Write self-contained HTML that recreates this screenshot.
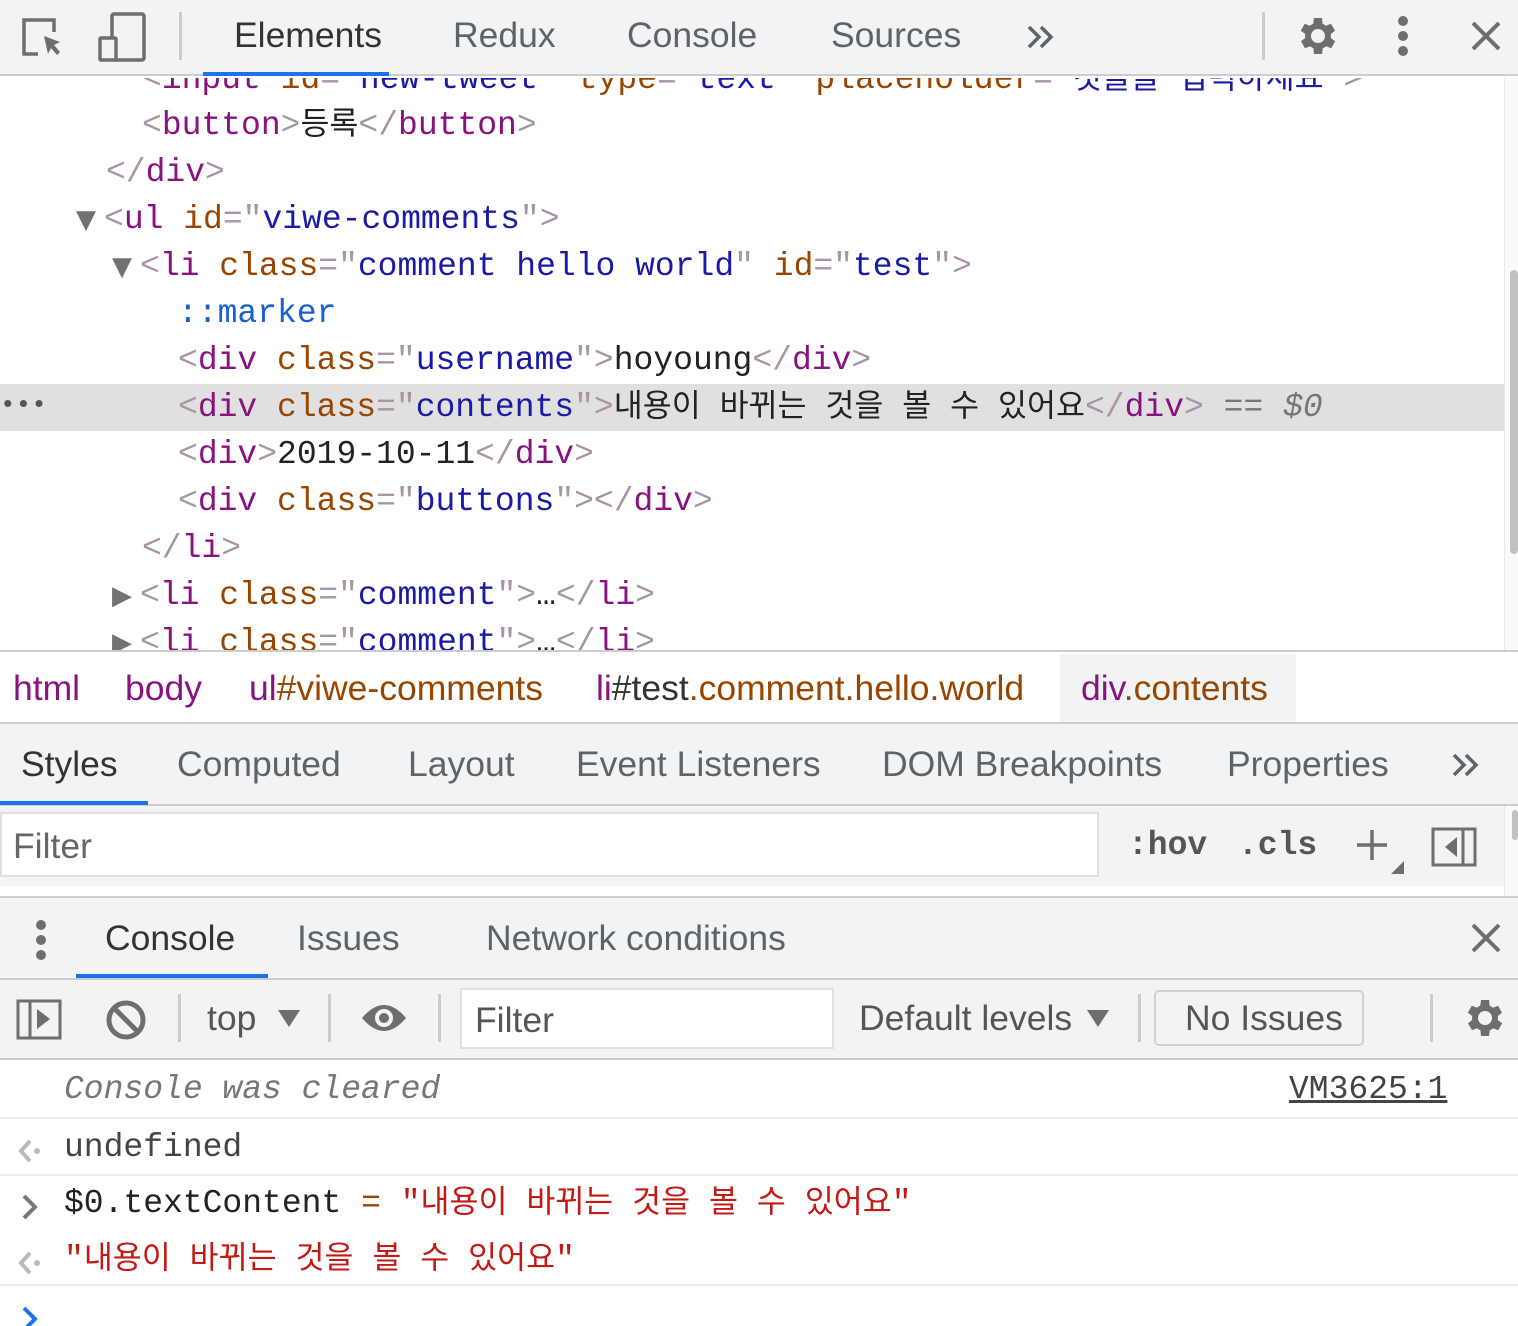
<!DOCTYPE html>
<html><head><meta charset="utf-8"><style>
*{margin:0;padding:0;box-sizing:border-box}
body{width:1518px;height:1322px;overflow:hidden;background:#fff;font-family:"Liberation Sans","Noto Sans CJK KR",sans-serif;position:relative;color:#333}
.abs{position:absolute}
.mono{font-family:"Liberation Mono","Noto Sans CJK KR",monospace;font-size:33px;white-space:pre;line-height:47px}
.k{font-size:31.5px}
.tg{color:#881280}.br{color:#a894a6}.at{color:#994500}.av{color:#1a1aa6}.tx{color:#222}
.bar{background:#f1f3f4}
.ui{font-size:35.5px;color:#5f6368;white-space:nowrap}
.line{position:absolute;left:0;height:47px;line-height:47px}
.tri{display:inline-block;width:28px;color:#727272;font-size:26px;font-family:"DejaVu Sans",sans-serif}
</style></head><body>
<!-- top bar -->
<div class="abs bar" style="left:0;top:0;width:1518px;height:76px;border-bottom:2px solid #cbcdd1"></div>
<svg class="abs" style="left:18px;top:14px" width="50" height="48" viewBox="0 0 50 48"><path d="M20 40H6V6h30v12" fill="none" stroke="#6e6e6e" stroke-width="3.5"/><path d="M26 22l16 6-6 3 6 7-3 3-6-7-3 6z" fill="#6e6e6e"/></svg>
<svg class="abs" style="left:98px;top:12px" width="50" height="50" viewBox="0 0 50 50"><rect x="14" y="2" width="32" height="46" rx="2" fill="none" stroke="#6e6e6e" stroke-width="3.5"/><rect x="2" y="26" width="16" height="22" rx="1" fill="#f1f3f4" stroke="#6e6e6e" stroke-width="3.5"/></svg>
<div class="abs" style="left:179px;top:12px;width:3px;height:48px;background:#ccc"></div>
<div class="abs ui" style="left:234px;top:15px;color:#333">Elements</div>
<div class="abs" style="left:203px;top:72px;width:186px;height:4px;background:#1a73e8"></div>
<div class="abs ui" style="left:453px;top:15px">Redux</div>
<div class="abs ui" style="left:627px;top:15px">Console</div>
<div class="abs ui" style="left:831px;top:15px">Sources</div>
<svg class="abs" style="left:1026px;top:24px" width="30" height="26"><path d="M3 3l10 10L3 23M15 3l10 10-10 10" fill="none" stroke="#5f6368" stroke-width="3.5"/></svg>
<div class="abs" style="left:1262px;top:12px;width:3px;height:48px;background:#ccc"></div>
<svg class="abs" style="left:1294px;top:12px" width="48" height="48" viewBox="0 0 24 24"><path fill="#6e6e6e" d="M19.4 13a7.5 7.5 0 000-2l2.1-1.6-2-3.5-2.5 1a7 7 0 00-1.7-1L15 3h-4l-.4 2.9a7 7 0 00-1.7 1l-2.5-1-2 3.5L6.6 11a7.5 7.5 0 000 2l-2.1 1.6 2 3.5 2.5-1a7 7 0 001.7 1L11 21h4l.4-2.9a7 7 0 001.7-1l2.5 1 2-3.5zM13 15.5a3.5 3.5 0 110-7 3.5 3.5 0 010 7z" transform="translate(-1 0)"/></svg>
<div class="abs" style="left:1398px;top:16px;width:10px;height:40px"><div style="width:10px;height:10px;border-radius:50%;background:#6e6e6e;margin-bottom:5px"></div><div style="width:10px;height:10px;border-radius:50%;background:#6e6e6e;margin-bottom:5px"></div><div style="width:10px;height:10px;border-radius:50%;background:#6e6e6e"></div></div>
<svg class="abs" style="left:1470px;top:20px" width="32" height="32"><path d="M3 3L29 29M29 3L3 29" stroke="#6e6e6e" stroke-width="4"/></svg>

<!-- elements tree -->
<div class="abs" style="left:0;top:78px;width:1504px;height:572px;overflow:hidden">
<div class="mono" style="position:absolute;top:-22px;left:0;width:1504px">
<div class="line" style="top:0;left:142px"><span class="br">&lt;</span><span class="tg">input</span> <span class="at">id</span><span class="br">="</span><span class="av">new-tweet</span><span class="br">"</span> <span class="at">type</span><span class="br">="</span><span class="av">text</span><span class="br">"</span> <span class="at">placeholder</span><span class="br">="</span><span class="av k">것을을 입력하세요</span><span class="br">"&gt;</span></div>
<div class="line" style="top:46px;left:142px"><span class="br">&lt;</span><span class="tg">button</span><span class="br">&gt;</span><span class="tx k">등록</span><span class="br">&lt;/</span><span class="tg">button</span><span class="br">&gt;</span></div>
<div class="line" style="top:93px;left:106px"><span class="br">&lt;/</span><span class="tg">div</span><span class="br">&gt;</span></div>
<div class="line" style="top:140px;left:76px"><span class="tri">▼</span><span class="br">&lt;</span><span class="tg">ul</span> <span class="at">id</span><span class="br">="</span><span class="av">viwe-comments</span><span class="br">"&gt;</span></div>
<div class="line" style="top:187px;left:112px"><span class="tri">▼</span><span class="br">&lt;</span><span class="tg">li</span> <span class="at">class</span><span class="br">="</span><span class="av">comment hello world</span><span class="br">"</span> <span class="at">id</span><span class="br">="</span><span class="av">test</span><span class="br">"&gt;</span></div>
<div class="line" style="top:234px;left:178px;color:#1a5fd0">::marker</div>
<div class="line" style="top:281px;left:178px"><span class="br">&lt;</span><span class="tg">div</span> <span class="at">class</span><span class="br">="</span><span class="av">username</span><span class="br">"&gt;</span><span class="tx">hoyoung</span><span class="br">&lt;/</span><span class="tg">div</span><span class="br">&gt;</span></div>
<div class="line" style="top:328px;left:0;width:1504px;background:#e0e0e0"><span style="color:#555;font-size:26px;position:absolute;left:0;top:-2px">•••</span><span style="position:absolute;left:178px"><span class="br">&lt;</span><span class="tg">div</span> <span class="at">class</span><span class="br">="</span><span class="av">contents</span><span class="br">"&gt;</span><span class="tx k">내용이 바뀌는 것을 볼 수 있어요</span><span class="br">&lt;/</span><span class="tg">div</span><span class="br">&gt;</span> <span style="color:#777">== <i>$0</i></span></span></div>
<div class="line" style="top:375px;left:178px"><span class="br">&lt;</span><span class="tg">div</span><span class="br">&gt;</span><span class="tx">2019-10-11</span><span class="br">&lt;/</span><span class="tg">div</span><span class="br">&gt;</span></div>
<div class="line" style="top:422px;left:178px"><span class="br">&lt;</span><span class="tg">div</span> <span class="at">class</span><span class="br">="</span><span class="av">buttons</span><span class="br">"&gt;&lt;/</span><span class="tg">div</span><span class="br">&gt;</span></div>
<div class="line" style="top:469px;left:142px"><span class="br">&lt;/</span><span class="tg">li</span><span class="br">&gt;</span></div>
<div class="line" style="top:516px;left:112px"><span class="tri">▶</span><span class="br">&lt;</span><span class="tg">li</span> <span class="at">class</span><span class="br">="</span><span class="av">comment</span><span class="br">"&gt;</span><span class="tx">…</span><span class="br">&lt;/</span><span class="tg">li</span><span class="br">&gt;</span></div>
<div class="line" style="top:563px;left:112px"><span class="tri">▶</span><span class="br">&lt;</span><span class="tg">li</span> <span class="at">class</span><span class="br">="</span><span class="av">comment</span><span class="br">"&gt;</span><span class="tx">…</span><span class="br">&lt;/</span><span class="tg">li</span><span class="br">&gt;</span></div>
</div></div>
<div class="abs" style="left:1504px;top:78px;width:14px;height:572px;background:#fafafa;border-left:1px solid #e6e6e6"></div>
<div class="abs" style="left:1510px;top:270px;width:8px;height:284px;background:#c1c1c1;border-radius:4px"></div>

<!-- breadcrumbs -->
<div class="abs" style="left:0;top:650px;width:1518px;height:74px;background:#fff;border-top:2px solid #cbcdd1;border-bottom:2px solid #cbcdd1"></div>
<div class="abs" style="left:1060px;top:654px;width:236px;height:68px;background:#f1f3f4"></div>
<div class="abs ui" style="left:13px;top:668px;color:#881280">html</div>
<div class="abs ui" style="left:125px;top:668px;color:#881280">body</div>
<div class="abs ui" style="left:249px;top:668px;color:#881280">ul<span style="color:#994500">#viwe-comments</span></div>
<div class="abs ui" style="left:596px;top:668px;color:#881280">li<span style="color:#333">#test</span><span style="color:#994500">.comment.hello.world</span></div>
<div class="abs ui" style="left:1081px;top:668px;color:#881280">div<span style="color:#994500">.contents</span></div>

<!-- styles tabs -->
<div class="abs bar" style="left:0;top:724px;width:1518px;height:82px;border-bottom:2px solid #cbcdd1"></div>
<div class="abs ui" style="left:21px;top:744px;color:#333">Styles</div>
<div class="abs" style="left:0;top:801px;width:148px;height:4px;background:#1a73e8"></div>
<div class="abs ui" style="left:177px;top:744px">Computed</div>
<div class="abs ui" style="left:408px;top:744px">Layout</div>
<div class="abs ui" style="left:576px;top:744px">Event Listeners</div>
<div class="abs ui" style="left:882px;top:744px">DOM Breakpoints</div>
<div class="abs ui" style="left:1227px;top:744px">Properties</div>
<svg class="abs" style="left:1451px;top:752px" width="30" height="26"><path d="M3 3l10 10L3 23M15 3l10 10-10 10" fill="none" stroke="#5f6368" stroke-width="3.5"/></svg>

<!-- filter row -->
<div class="abs bar" style="left:0;top:806px;width:1504px;height:80px"></div>
<div class="abs" style="left:0;top:886px;width:1504px;height:10px;background:#fff"></div>
<div class="abs" style="left:1504px;top:806px;width:14px;height:90px;background:#fafafa;border-left:1px solid #e6e6e6"></div>
<div class="abs" style="left:1512px;top:810px;width:6px;height:30px;background:#c1c1c1;border-radius:3px"></div>
<div class="abs" style="left:0;top:812px;width:1099px;height:65px;background:#fff;border:2px solid #e0e0e0"></div>
<div class="abs ui" style="left:13px;top:826px;color:#666">Filter</div>
<div class="abs mono" style="left:1128px;top:822px;font-weight:bold;color:#555">:hov</div>
<div class="abs mono" style="left:1238px;top:822px;font-weight:bold;color:#555">.cls</div>
<svg class="abs" style="left:1354px;top:828px" width="56" height="48"><path d="M18 2v30M3 17h30" stroke="#6e6e6e" stroke-width="3.5"/><path d="M50 46H37l13-13z" fill="#6e6e6e"/></svg>
<svg class="abs" style="left:1431px;top:827px" width="48" height="40"><rect x="2" y="2" width="42" height="36" fill="none" stroke="#6e6e6e" stroke-width="3"/><path d="M32 2v36" stroke="#6e6e6e" stroke-width="3"/><path d="M26 10v20l-12-10z" fill="#6e6e6e"/></svg>

<!-- drawer tabs -->
<div class="abs bar" style="left:0;top:896px;width:1518px;height:84px;border-top:2px solid #cbcdd1;border-bottom:2px solid #cbcdd1"></div>
<div class="abs" style="left:36px;top:920px"><div style="width:10px;height:10px;border-radius:50%;background:#6e6e6e;margin-bottom:5px"></div><div style="width:10px;height:10px;border-radius:50%;background:#6e6e6e;margin-bottom:5px"></div><div style="width:10px;height:10px;border-radius:50%;background:#6e6e6e"></div></div>
<div class="abs ui" style="left:105px;top:918px;color:#333">Console</div>
<div class="abs" style="left:76px;top:974px;width:192px;height:4px;background:#1a73e8"></div>
<div class="abs ui" style="left:297px;top:918px">Issues</div>
<div class="abs ui" style="left:486px;top:918px">Network conditions</div>
<svg class="abs" style="left:1470px;top:922px" width="32" height="32"><path d="M3 3L29 29M29 3L3 29" stroke="#6e6e6e" stroke-width="4"/></svg>

<!-- console toolbar -->
<div class="abs bar" style="left:0;top:980px;width:1518px;height:80px;border-bottom:2px solid #cbcdd1"></div>
<svg class="abs" style="left:16px;top:999px" width="46" height="42"><rect x="2" y="2" width="42" height="37" fill="none" stroke="#6e6e6e" stroke-width="3"/><path d="M14 2v37" stroke="#6e6e6e" stroke-width="3"/><path d="M21 10v20l13-10z" fill="#6e6e6e"/></svg>
<svg class="abs" style="left:105px;top:999px" width="42" height="42"><circle cx="21" cy="21" r="17" fill="none" stroke="#6e6e6e" stroke-width="5"/><path d="M9 9l24 24" stroke="#6e6e6e" stroke-width="5"/></svg>
<div class="abs" style="left:178px;top:994px;width:3px;height:48px;background:#ccc"></div>
<div class="abs ui" style="left:207px;top:998px;color:#555">top</div>
<div class="abs" style="left:278px;top:1010px;width:0;height:0;border-left:11px solid transparent;border-right:11px solid transparent;border-top:17px solid #6e6e6e"></div>
<div class="abs" style="left:328px;top:994px;width:3px;height:48px;background:#ccc"></div>
<svg class="abs" style="left:360px;top:1000px" width="48" height="36"><path d="M2 18Q24-8 46 18Q24 44 2 18z" fill="#6e6e6e"/><circle cx="24" cy="18" r="9" fill="#f1f3f4"/><circle cx="24" cy="18" r="5" fill="#6e6e6e"/></svg>
<div class="abs" style="left:438px;top:994px;width:3px;height:48px;background:#ccc"></div>
<div class="abs" style="left:460px;top:988px;width:374px;height:61px;background:#fff;border:2px solid #e0e0e0"></div>
<div class="abs ui" style="left:475px;top:1000px;color:#555">Filter</div>
<div class="abs ui" style="left:859px;top:998px;color:#555">Default levels</div>
<div class="abs" style="left:1087px;top:1010px;width:0;height:0;border-left:11px solid transparent;border-right:11px solid transparent;border-top:17px solid #6e6e6e"></div>
<div class="abs" style="left:1138px;top:994px;width:3px;height:48px;background:#ccc"></div>
<div class="abs" style="left:1154px;top:990px;width:210px;height:56px;border:2px solid #d0d0d0;border-radius:5px"></div>
<div class="abs ui" style="left:1185px;top:998px;color:#555">No Issues</div>
<div class="abs" style="left:1430px;top:994px;width:3px;height:48px;background:#ccc"></div>
<svg class="abs" style="left:1461px;top:994px" width="48" height="48" viewBox="0 0 24 24"><path fill="#6e6e6e" d="M19.4 13a7.5 7.5 0 000-2l2.1-1.6-2-3.5-2.5 1a7 7 0 00-1.7-1L15 3h-4l-.4 2.9a7 7 0 00-1.7 1l-2.5-1-2 3.5L6.6 11a7.5 7.5 0 000 2l-2.1 1.6 2 3.5 2.5-1a7 7 0 001.7 1L11 21h4l.4-2.9a7 7 0 001.7-1l2.5 1 2-3.5zM13 15.5a3.5 3.5 0 110-7 3.5 3.5 0 010 7z" transform="translate(-1 0)"/></svg>

<!-- console messages -->
<div class="abs mono" style="left:64px;top:1066px;color:#777;font-style:italic">Console was cleared</div>
<div class="abs mono" style="left:1289px;top:1066px;color:#444;text-decoration:underline">VM3625:1</div>
<div class="abs" style="left:0;top:1117px;width:1518px;height:2px;background:#ececec"></div>
<svg class="abs" style="left:17px;top:1138px" width="26" height="26"><path d="M13 3L4 13l9 10" fill="none" stroke="#bbb" stroke-width="4"/><circle cx="20" cy="13" r="3" fill="#bbb"/></svg>
<div class="abs mono" style="left:64px;top:1124px;color:#444">undefined</div>
<div class="abs" style="left:0;top:1174px;width:1518px;height:2px;background:#ececec"></div>
<svg class="abs" style="left:20px;top:1193px" width="20" height="28"><path d="M4 3l11 11L4 25" fill="none" stroke="#777" stroke-width="4"/></svg>
<div class="abs mono" style="left:64px;top:1180px;color:#222">$0.textContent <span style="color:#994500">=</span> <span style="color:#c41a16">"<span class="k">내용이 바뀌는 것을 볼 수 있어요</span>"</span></div>
<svg class="abs" style="left:17px;top:1250px" width="26" height="26"><path d="M13 3L4 13l9 10" fill="none" stroke="#bbb" stroke-width="4"/><circle cx="20" cy="13" r="3" fill="#bbb"/></svg>
<div class="abs mono" style="left:64px;top:1236px;color:#c41a16">"<span class="k">내용이 바뀌는 것을 볼 수 있어요</span>"</div>
<div class="abs" style="left:0;top:1284px;width:1518px;height:2px;background:#ececec"></div>
<svg class="abs" style="left:20px;top:1306px" width="20" height="20"><path d="M4 2l11 11L4 24" fill="none" stroke="#1a73e8" stroke-width="4"/></svg>
</body></html>
